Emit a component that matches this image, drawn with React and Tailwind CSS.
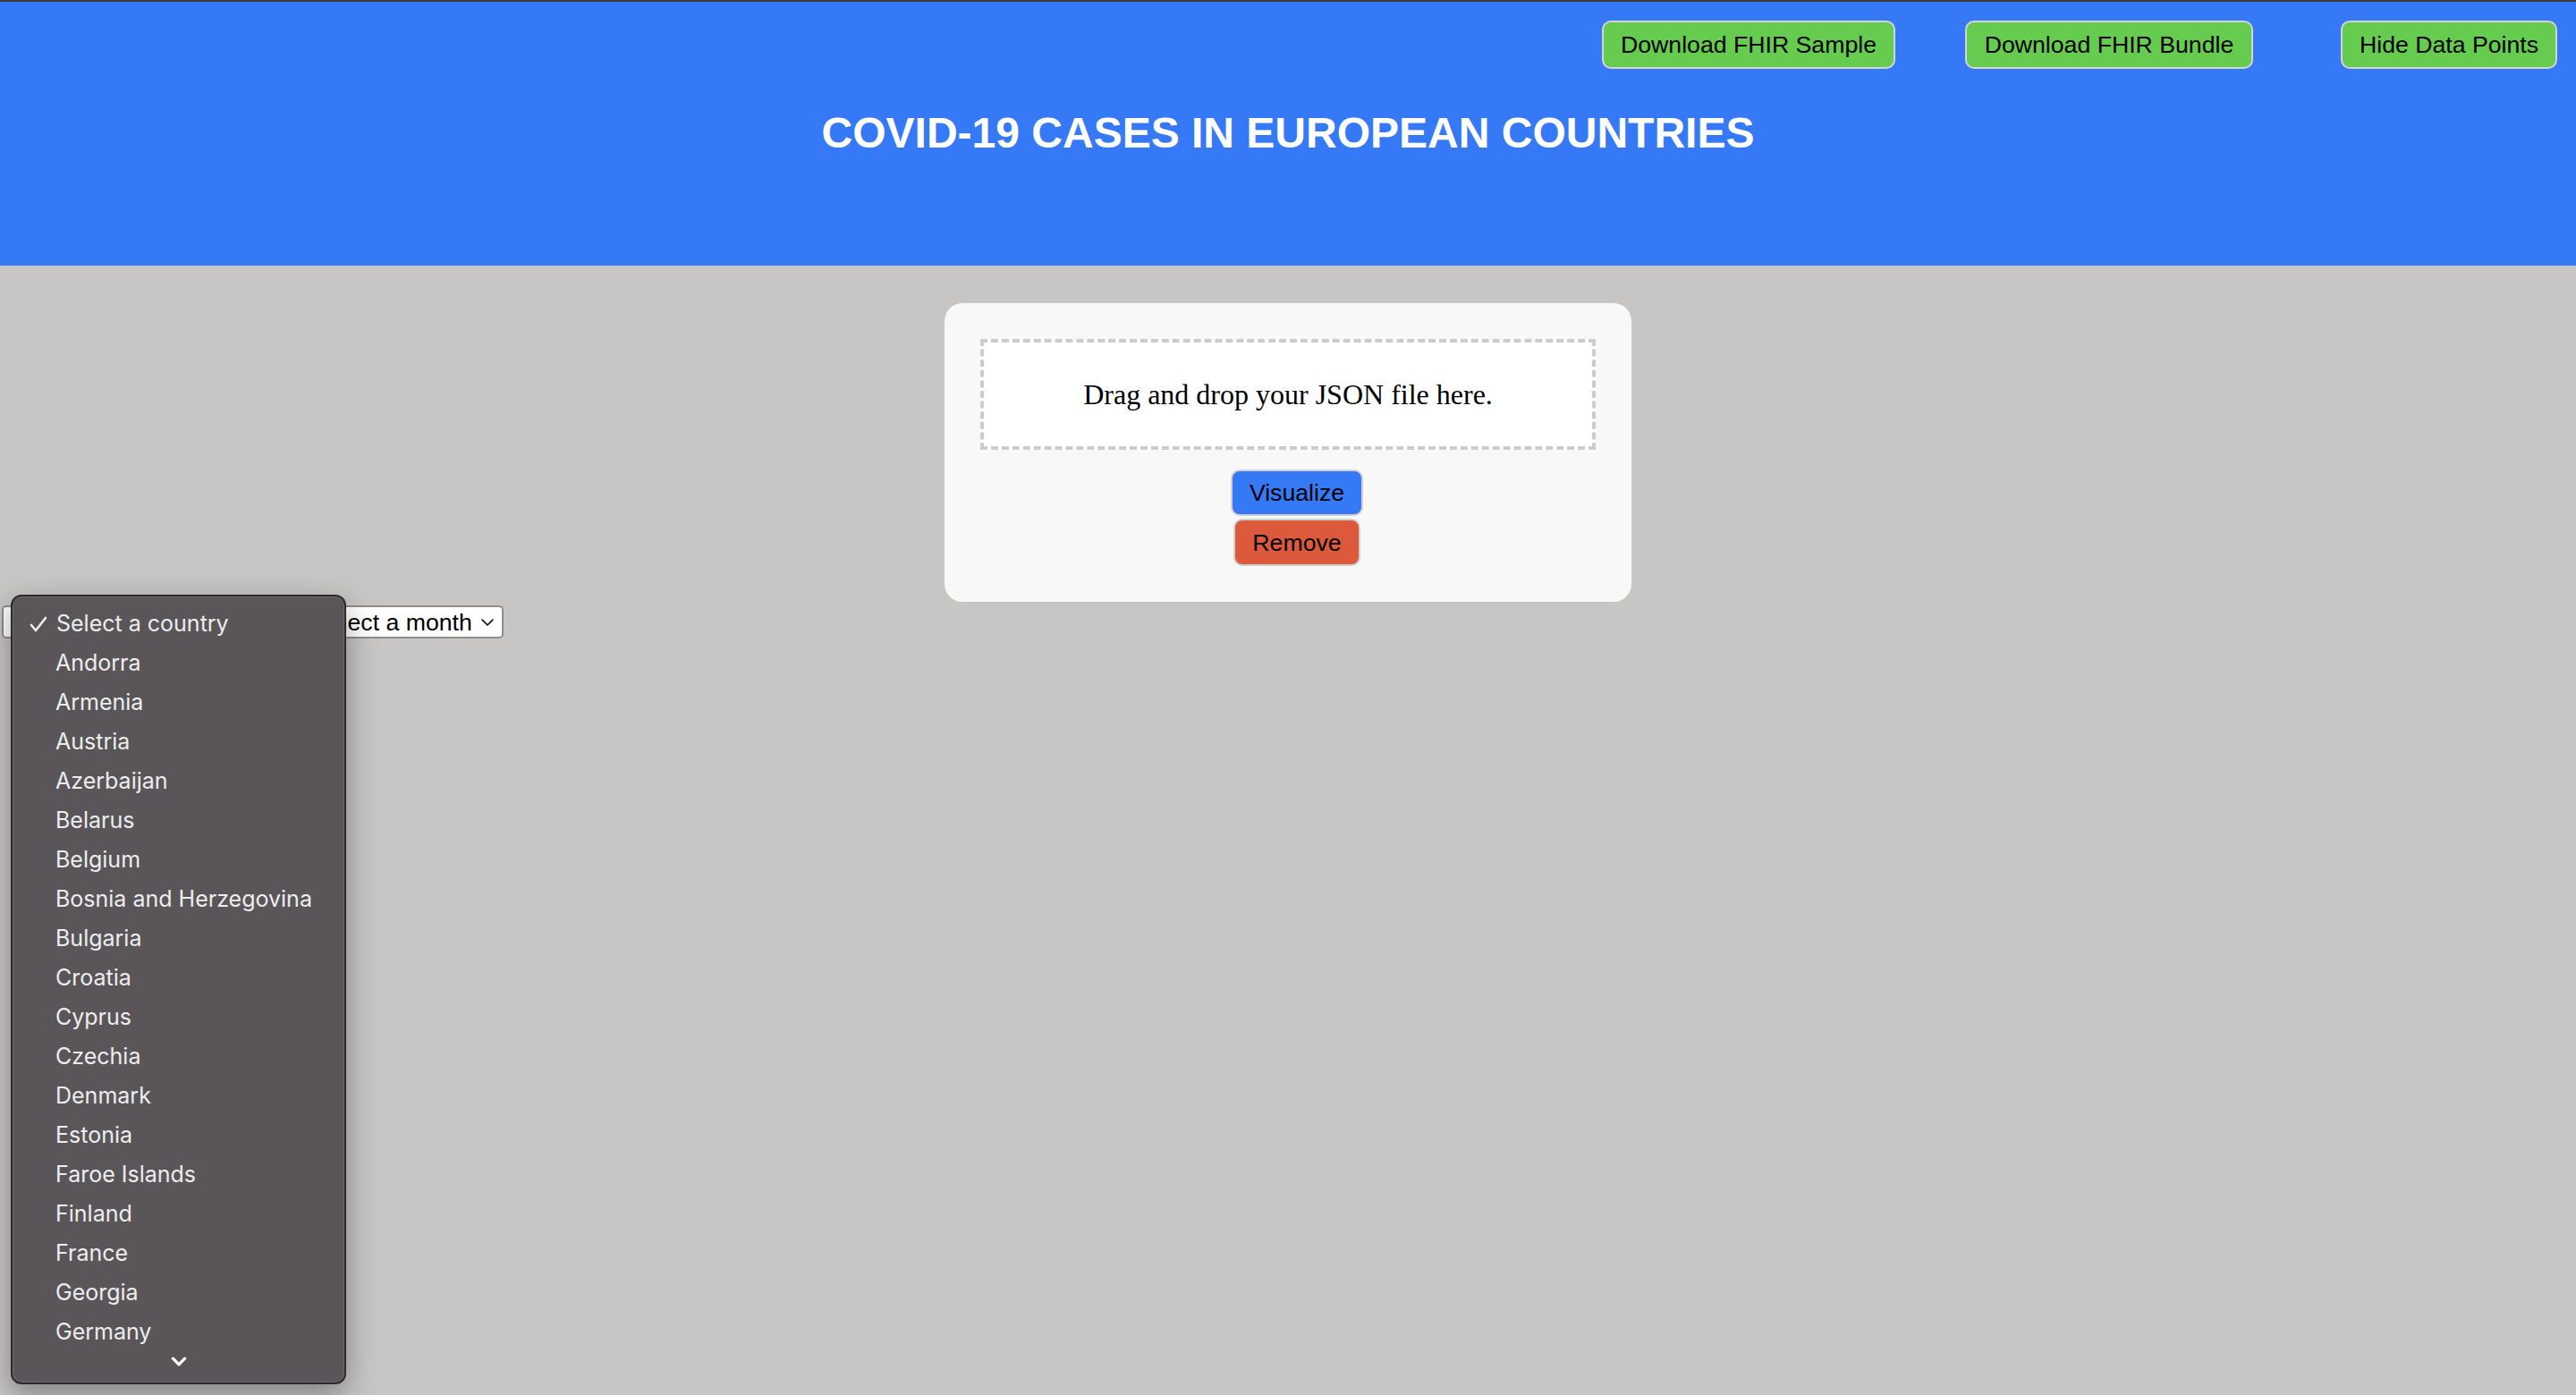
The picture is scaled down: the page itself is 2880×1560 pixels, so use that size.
import React from 'react';

const countries = [
  'Andorra',
  'Armenia',
  'Austria',
  'Azerbaijan',
  'Belarus',
  'Belgium',
  'Bosnia and Herzegovina',
  'Bulgaria',
  'Croatia',
  'Cyprus',
  'Czechia',
  'Denmark',
  'Estonia',
  'Faroe Islands',
  'Finland',
  'France',
  'Georgia',
  'Germany',
];

const sans = { fontFamily: '"Liberation Sans", Arial, sans-serif' };

function HeaderButton({ children, className = '' }) {
  return (
    <button
      type="button"
      className={`h-[54px] rounded-[10px] border-2 border-[#d4d4d4] bg-[#66cc4f] text-black text-[26.67px] leading-none ${className}`}
    >
      {children}
    </button>
  );
}

function Chevron({ className = '' }) {
  return (
    <svg viewBox="0 0 16 10" className={className} fill="none" stroke="currentColor" strokeLinecap="round" strokeLinejoin="round">
      <path d="M2 2l6 6 6-6" />
    </svg>
  );
}

function FakeSelect({ label, width }) {
  return (
    <div
      className={`h-[37px] ${width} flex items-center justify-between pl-[8px] pr-[8px] bg-white border-2 border-[#8d8d8d] rounded-[5px] text-[26.67px] text-black`}
    >
      <span>{label}</span>
      <Chevron className="w-[16px] h-[10px] stroke-[1.6]" />
    </div>
  );
}

function CountryMenu() {
  return (
    <div
      className="absolute left-[12px] top-[665px] w-[375px] h-[883px] rounded-[12px] bg-[#595559] border-2 border-[#2a2a2a] shadow-[0_12px_34px_rgba(0,0,0,0.35),inset_0_0_0_1px_rgba(255,255,255,0.12)] overflow-hidden"
      style={{ fontFamily: 'Inter, "Noto Sans", sans-serif' }}
    >
      <div className="pt-[9px]">
        <div className="h-[44px] flex items-center text-[#ededed] text-[25px]">
          <span className="w-[49px] flex justify-end pr-[10px]">
            <svg viewBox="0 0 20 20" className="w-[20px] h-[20px]" fill="none" stroke="#ededed" strokeWidth="2.6" strokeLinecap="round" strokeLinejoin="round">
              <path d="M2 11l5 6L18 3" />
            </svg>
          </span>
          <span>Select a country</span>
        </div>
        {countries.map((c) => (
          <div key={c} className="h-[44px] flex items-center pl-[48px] text-[#ededed] text-[25px]">
            {c}
          </div>
        ))}
      </div>
      <div className="flex justify-center pt-[5px]">
        <Chevron className="w-[18px] h-[11px] text-white stroke-[3]" />
      </div>
    </div>
  );
}

export default function App() {
  return (
    <div className="relative min-h-[1560px] bg-[#c7c6c5]" style={sans}>
      <div className="h-[2px] bg-[#3d3d3d]" />
      <header className="h-[295px] bg-[#3579f6] pt-[21px]">
        <div className="flex justify-end pr-[21px]">
          <HeaderButton className="w-[328px]">Download FHIR Sample</HeaderButton>
          <HeaderButton className="w-[322px] ml-[78px]">Download FHIR Bundle</HeaderButton>
          <HeaderButton className="w-[242px] ml-[98px]">Hide Data Points</HeaderButton>
        </div>
        <h1 className="mt-[44px] text-center text-white font-bold text-[48px] leading-[56px]">
          COVID-19 CASES IN EUROPEAN COUNTRIES
        </h1>
      </header>

      <div className="flex justify-center pt-[42px]">
        <div className="w-[768px] rounded-[20px] bg-[#f8f8f8] p-[40px]">
          <div
            className="h-[124px] flex items-center justify-center border-4 border-dashed border-[#cccccc] bg-white text-[32px] leading-[36px] text-black"
            style={{ fontFamily: '"Liberation Serif", "Times New Roman", serif' }}
          >
            Drag and drop your JSON file here.
          </div>
          <div className="flex flex-col items-center pl-[20px] mt-[22px] gap-[3px]">
            <button
              type="button"
              className="w-[148px] h-[52px] rounded-[10px] border-2 border-[#d0d0d0] bg-[#3579f6] text-black text-[26.67px]"
            >
              Visualize
            </button>
            <button
              type="button"
              className="w-[142px] h-[53px] rounded-[10px] border-2 border-[#d0d0d0] bg-[#dc593b] text-black text-[26.67px]"
            >
              Remove
            </button>
          </div>
        </div>
      </div>

      <div className="flex items-center gap-[8px] pl-[2px] mt-[4px]">
        <FakeSelect label="Select a country" width="w-[330px]" />
        <FakeSelect label="Select a month" width="w-[223px]" />
      </div>

      <CountryMenu />
    </div>
  );
}
